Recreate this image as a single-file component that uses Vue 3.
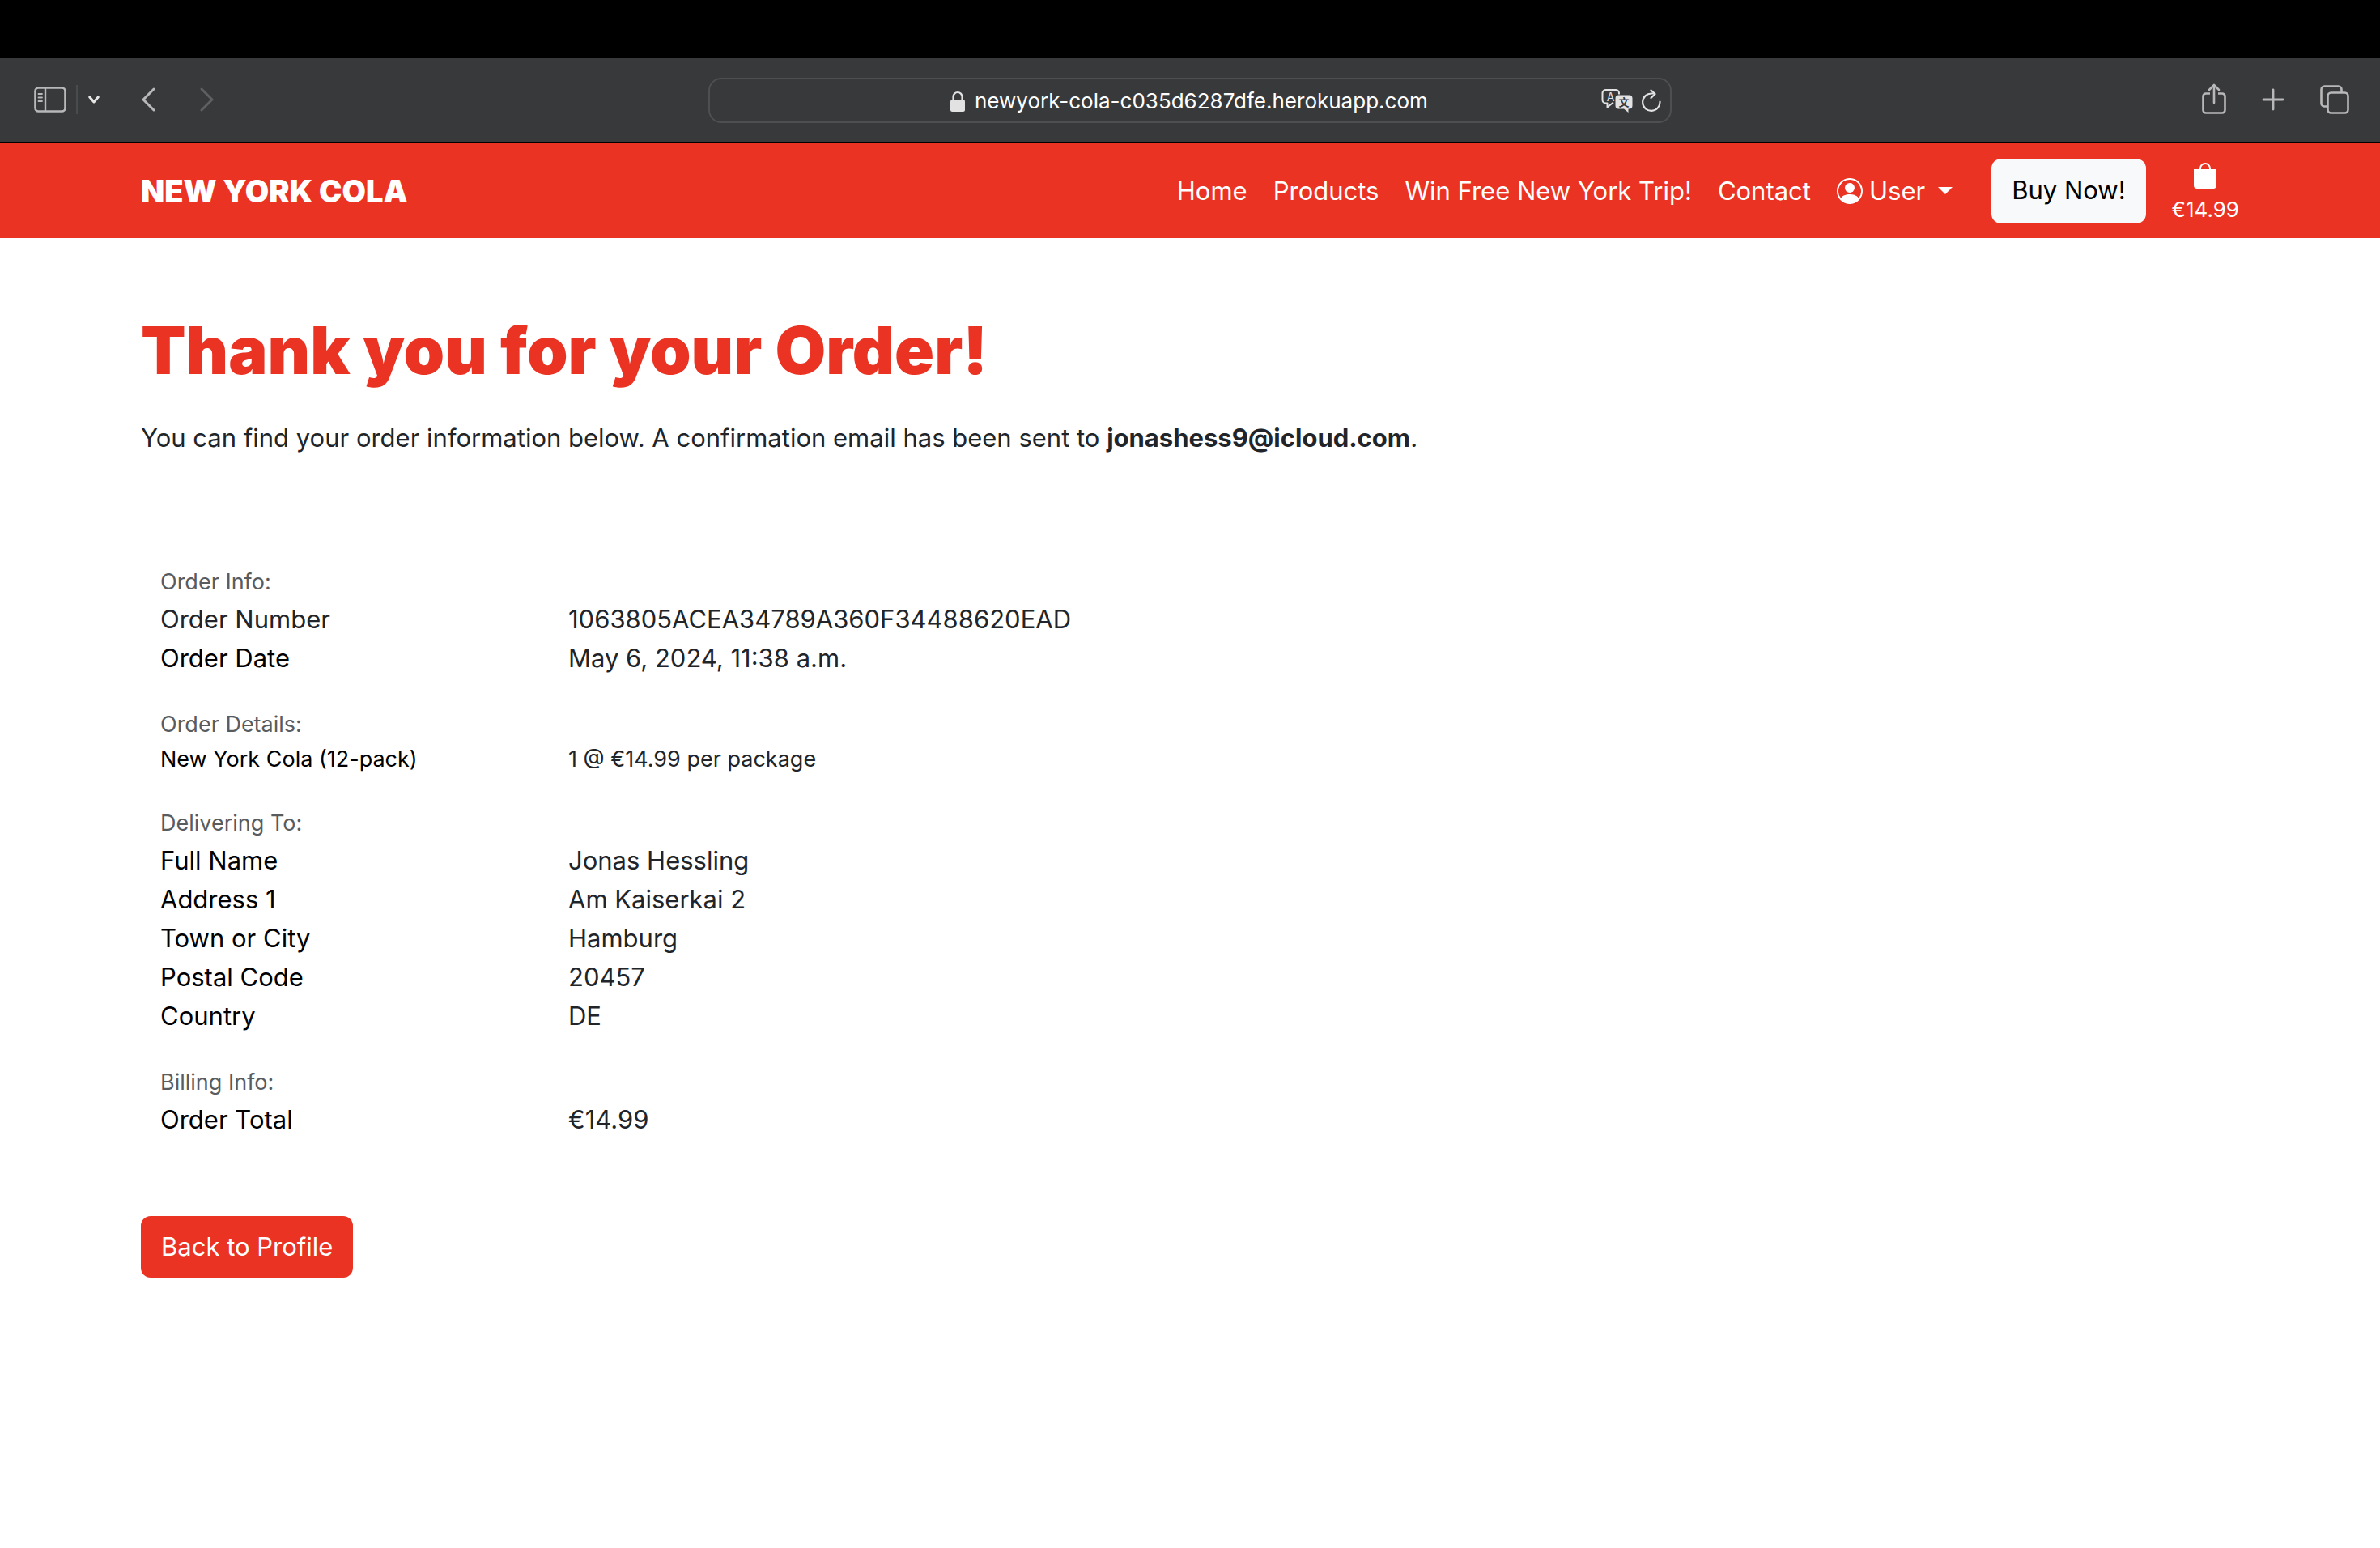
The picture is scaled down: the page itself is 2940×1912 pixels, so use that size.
<script setup>
const links = ['Home', 'Products', 'Win Free New York Trip!', 'Contact']

const sections = [
  {
    title: 'Order Info:',
    rows: [
      { label: 'Order Number', value: '1063805ACEA34789A360F34488620EAD', soft: true },
      { label: 'Order Date', value: 'May 6, 2024, 11:38 a.m.' },
    ],
  },
  {
    title: 'Order Details:',
    small: true,
    rows: [{ label: 'New York Cola (12-pack)', value: '1 @ €14.99 per package' }],
  },
  {
    title: 'Delivering To:',
    rows: [
      { label: 'Full Name', value: 'Jonas Hessling' },
      { label: 'Address 1', value: 'Am Kaiserkai 2' },
      { label: 'Town or City', value: 'Hamburg' },
      { label: 'Postal Code', value: '20457' },
      { label: 'Country', value: 'DE' },
    ],
  },
  {
    title: 'Billing Info:',
    rows: [{ label: 'Order Total', value: '€14.99' }],
  },
]
</script>

<template>
  <div class="window">
    <div class="notch-strip"></div>

    <div class="toolbar">
      <div class="tools tools-left">
        <button class="tool" aria-label="Sidebar">
          <svg width="40" height="32" viewBox="0 0 40 32" fill="none" stroke="currentColor">
            <rect x="1.5" y="1.5" width="37" height="29" rx="4" stroke-width="2.6" />
            <path d="M14 2v28" stroke-width="2.4" />
            <path d="M5.5 9h4.5M5.5 13.5h4.5M5.5 18h4.5" stroke-width="1.8" stroke-linecap="round" />
          </svg>
        </button>
        <span class="divider"></span>
        <button class="tool bright" aria-label="Tab groups">
          <svg width="14" height="10" viewBox="0 0 14 10" fill="none" stroke="currentColor" stroke-width="3" stroke-linecap="round" stroke-linejoin="round">
            <path d="M1.8 2L7 8l5.2-6" />
          </svg>
        </button>
        <button class="tool back" aria-label="Back">
          <svg width="17" height="30" viewBox="0 0 17 30" fill="none" stroke="currentColor" stroke-width="3" stroke-linecap="round" stroke-linejoin="round">
            <path d="M15 2L2 15l13 13" />
          </svg>
        </button>
        <button class="tool forward" aria-label="Forward" disabled>
          <svg width="17" height="30" viewBox="0 0 17 30" fill="none" stroke="currentColor" stroke-width="3" stroke-linecap="round" stroke-linejoin="round">
            <path d="M2 2l13 13L2 28" />
          </svg>
        </button>
      </div>

      <div class="address">
        <span></span>
        <label class="address-main">
          <svg width="18" height="26" viewBox="0 0 18 26" aria-hidden="true">
            <path d="M3.5 13V7.5a5.5 5.5 0 0 1 11 0V13" fill="none" stroke="#e2e2e2" stroke-width="2.2" />
            <rect x="0" y="11" width="18" height="15" rx="2.5" fill="#e2e2e2" />
          </svg>
          <input class="url" type="text" aria-label="Address" value="newyork-cola-c035d6287dfe.herokuapp.com" />
        </label>
        <div class="address-actions">
          <button class="tool light" aria-label="Translate">
            <svg width="40" height="30" viewBox="0 0 40 30">
              <path d="M15 17.5L7.5 23.5V18.5H5.5A4 4 0 0 1 1.5 14.5V6A4 4 0 0 1 5.5 2H18A4 4 0 0 1 22 6V7.5" fill="none" stroke="currentColor" stroke-width="2" stroke-linejoin="round" />
              <path d="M21.5 8.5H34.5A4 4 0 0 1 38.5 12.5V21.5A4 4 0 0 1 34.5 25.5H33.5V30L28 25.5H21.5A4 4 0 0 1 17.5 21.5V12.5A4 4 0 0 1 21.5 8.5Z" fill="currentColor" />
              <text x="11.5" y="15.5" text-anchor="middle" font-size="14" font-family="Inter, sans-serif" fill="currentColor">A</text>
              <text x="28" y="22" text-anchor="middle" font-size="13" font-weight="700" font-family="'Noto Sans CJK SC', sans-serif" fill="#38393b">文</text>
            </svg>
          </button>
          <button class="tool light" aria-label="Reload">
            <svg width="24" height="28" viewBox="0 0 24 28" fill="none" stroke="currentColor" stroke-width="2.2" stroke-linecap="round" stroke-linejoin="round">
              <path d="M22.5 15.5A10.7 10.7 0 1 1 12 5.5h4" />
              <path d="M11.5 1.5L16.5 6l-5 5" />
            </svg>
          </button>
        </div>
      </div>

      <div class="tools tools-right">
        <button class="tool share" aria-label="Share">
          <svg width="30" height="38" viewBox="0 0 30 38" fill="none" stroke="currentColor" stroke-width="2.6" stroke-linecap="round" stroke-linejoin="round">
            <path d="M10 12.5H5A3.5 3.5 0 0 0 1.5 16v17A3.5 3.5 0 0 0 5 36.5h20a3.5 3.5 0 0 0 3.5-3.5V16a3.5 3.5 0 0 0-3.5-3.5H20" stroke-linecap="butt" />
            <path d="M15 24V2M9 8l6-6 6 6" />
          </svg>
        </button>
        <button class="tool" aria-label="New tab">
          <svg width="28" height="28" viewBox="0 0 28 28" stroke="currentColor" stroke-width="2.8" stroke-linecap="round">
            <path d="M14 2v24M2 14h24" />
          </svg>
        </button>
        <button class="tool" aria-label="Tab overview">
          <svg width="36" height="36" viewBox="0 0 36 36" fill="none" stroke="currentColor" stroke-width="2.6">
            <path d="M9 26.5H5.5a4 4 0 0 1-4-4v-17a4 4 0 0 1 4-4h17a4 4 0 0 1 4 4V9" />
            <rect x="9.5" y="9.5" width="25" height="25" rx="4" />
          </svg>
        </button>
      </div>
    </div>

    <header class="navbar">
      <div class="container nav-row">
        <a class="brand" href="#">NEW YORK COLA</a>
        <nav class="nav">
          <a v-for="link in links" :key="link" class="nav-link" href="#">{{ link }}</a>
          <button class="nav-link user">
            <svg width="32" height="32" viewBox="0 0 16 16" fill="currentColor" aria-hidden="true">
              <path d="M11 6a3 3 0 1 1-6 0 3 3 0 0 1 6 0" />
              <path fill-rule="evenodd" d="M0 8a8 8 0 1 1 16 0A8 8 0 0 1 0 8m8-7a7 7 0 0 0-5.468 11.370C3.242 11.226 4.805 10 8 10s4.757 1.225 5.468 2.370A7 7 0 0 0 8 1" />
            </svg>
            <span>User</span>
            <span class="caret"></span>
          </button>
          <a class="btn btn-light" href="#">Buy Now!</a>
          <a class="bag" href="#">
            <svg width="32" height="32" viewBox="0 0 16 16" fill="currentColor" aria-hidden="true">
              <path d="M8 1a2.5 2.5 0 0 1 2.5 2.5V4h-5v-.5A2.5 2.5 0 0 1 8 1m3.5 3v-.5a3.5 3.5 0 1 0-7 0V4H1v10a2 2 0 0 0 2 2h10a2 2 0 0 0 2-2V4z" />
            </svg>
            <span>€14.99</span>
          </a>
        </nav>
      </div>
    </header>

    <main class="container main">
      <h1>Thank you for your Order!</h1>
      <p class="lead">
        You can find your order information below. A confirmation email has been sent to <strong>jonashess9@icloud.com</strong>.
      </p>

      <div class="order">
        <section v-for="section in sections" :key="section.title" :class="{ small: section.small }">
          <h2>{{ section.title }}</h2>
          <dl>
            <template v-for="row in section.rows" :key="row.label">
              <dt :class="{ soft: row.soft }">{{ row.label }}</dt>
              <dd>{{ row.value }}</dd>
            </template>
          </dl>
        </section>
      </div>

      <a class="btn btn-red" href="#">Back to Profile</a>
    </main>
  </div>
</template>

<style>
body {
  background: #fff;
}
</style>

<style scoped>
.window {
  font-family: Inter, 'Liberation Sans', sans-serif;
  font-size: 31px;
  line-height: 48px;
  color: #212529;
}

a {
  color: inherit;
  text-decoration: none;
}

button {
  border: 0;
  padding: 0;
  background: none;
  font: inherit;
  color: inherit;
}

svg {
  display: block;
  flex: none;
}

.notch-strip {
  height: 72px;
  background: #000;
}

.toolbar {
  box-sizing: border-box;
  display: grid;
  grid-template-columns: 1fr minmax(0, 1190px) 1fr;
  align-items: center;
  height: 105px;
  padding: 0 38px;
  background: #38393b;
  border-bottom: 1px solid #000;
}

.tools {
  display: flex;
  align-items: center;
  padding-bottom: 2px;
}

.tools-left {
  padding-left: 4px;
}

.tool {
  color: #b8b8ba;
}

.divider {
  width: 2px;
  height: 36px;
  margin: 0 13px 0 12px;
  background: #4a4b4d;
}

.bright {
  color: #e6e6e6;
}

.light {
  color: #e2e2e2;
}

.back {
  margin-left: 52px;
}

.forward {
  margin-left: 55px;
  color: #5f6062;
}

.tools-right {
  justify-content: flex-end;
  gap: 44px;
}

.share {
  padding-bottom: 2px;
}

.address {
  box-sizing: border-box;
  display: grid;
  grid-template-columns: 1fr auto 1fr;
  align-items: center;
  height: 56px;
  padding: 0 11px;
  border: 2px solid #4e4f51;
  border-radius: 16px;
}

.address-main {
  display: flex;
  align-items: center;
  gap: 12px;
  padding-top: 2px;
}

.url {
  width: 562px;
  padding: 0;
  border: 0;
  outline: 0;
  background: none;
  color: #fff;
  font: 26px/32px Inter, 'Liberation Sans', sans-serif;
}

.address-actions {
  display: flex;
  align-items: center;
  justify-content: flex-end;
  gap: 10px;
}

.container {
  box-sizing: border-box;
  max-width: 2640px;
  margin: 0 auto;
  padding: 0 24px;
}

.navbar {
  background: #eb3323;
  color: #fff;
}

.nav-row {
  display: flex;
  align-items: center;
  justify-content: space-between;
  height: 117px;
}

.brand {
  font-size: 38px;
  font-weight: 900;
}

.nav {
  display: flex;
  align-items: center;
  gap: 32px;
}

.user {
  display: flex;
  align-items: center;
  gap: 8px;
  margin-right: 16px;
}

.caret {
  margin-left: 8px;
  border: 9px solid transparent;
  border-top-color: #fff;
  border-bottom: 0;
}

.btn {
  display: inline-block;
  border-radius: 12px;
}

.btn-light {
  padding: 15px 25px 17px;
  background: #f8f9fa;
  color: #000;
}

.btn-red {
  padding: 14px 25px;
  background: #eb3323;
  color: #fff;
}

.bag {
  display: flex;
  flex-direction: column;
  align-items: center;
  gap: 6px;
  padding-top: 8px;
  font-size: 26px;
  line-height: 40px;
}

.main {
  padding-top: 91px;
}

h1 {
  margin: 0 0 36px;
  font-size: 81px;
  font-weight: 900;
  line-height: 96px;
  color: #eb3323;
}

.lead {
  margin: 0;
}

.order {
  display: flex;
  flex-direction: column;
  gap: 36px;
  padding: 132px 24px 95px;
}

h2 {
  margin: 0;
  font-size: 27px;
  font-weight: 400;
  line-height: 44px;
  color: #595c5f;
}

dl {
  display: grid;
  grid-template-columns: 504px 1fr;
  margin: 0;
}

dt {
  color: #000;
}

.soft {
  color: #212529;
}

dd {
  margin: 0;
}

.small dl {
  font-size: 27px;
  line-height: 42px;
}
</style>
